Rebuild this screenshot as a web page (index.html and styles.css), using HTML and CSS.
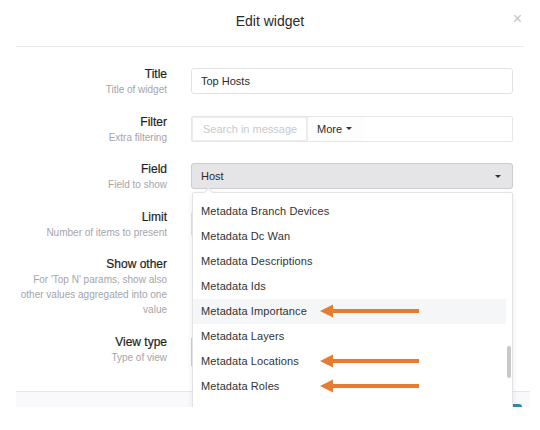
FILE: index.html
```html
<!DOCTYPE html>
<html>
<head>
<meta charset="utf-8">
<link rel="stylesheet" href="styles.css">
</head>
<body>
<div class="modal">
  <div class="header">
    <h1 class="title">Edit widget</h1>
    <span class="close">×</span>
  </div>
  <div class="body">
    <div class="row">
      <div class="label"><div class="name">Title</div><div class="hint">Title of widget</div></div>
      <div class="control"><div class="input">Top Hosts</div></div>
    </div>
    <div class="row">
      <div class="label"><div class="name">Filter</div><div class="hint">Extra filtering</div></div>
      <div class="control">
        <div class="group">
          <div class="search">Search in message</div>
          <div class="more">More <span class="caret"></span></div>
        </div>
      </div>
    </div>
    <div class="row">
      <div class="label"><div class="name">Field</div><div class="hint">Field to show</div></div>
      <div class="control field">
        <div class="select">Host <span class="caret"></span></div>
        <div class="dropdown">
          <span class="notch"></span>
          <ul class="menu">
            <li class="item">Metadata Branch Devices</li>
            <li class="item">Metadata Dc Wan</li>
            <li class="item">Metadata Descriptions</li>
            <li class="item">Metadata Ids</li>
            <li class="item hover">Metadata Importance</li>
            <li class="item">Metadata Layers</li>
            <li class="item">Metadata Locations</li>
            <li class="item">Metadata Roles</li>
          </ul>
          <span class="thumb"></span>
          <svg class="arrow a1" width="100" height="14" viewBox="0 0 100 14"><path d="M0 7 L13 0.5 L13 5 L99 5 L99 9 L13 9 L13 13.5 Z" fill="#e67c30"/></svg>
          <svg class="arrow a2" width="100" height="14" viewBox="0 0 100 14"><path d="M0 7 L13 0.5 L13 5 L99 5 L99 9 L13 9 L13 13.5 Z" fill="#e67c30"/></svg>
          <svg class="arrow a3" width="100" height="14" viewBox="0 0 100 14"><path d="M0 7 L13 0.5 L13 5 L99 5 L99 9 L13 9 L13 13.5 Z" fill="#e67c30"/></svg>
        </div>
      </div>
    </div>
    <div class="row">
      <div class="label"><div class="name">Limit</div><div class="hint">Number of items to present</div></div>
      <div class="control"><div class="input"></div></div>
    </div>
    <div class="row">
      <div class="label"><div class="name">Show other</div><div class="hint">For 'Top N' params, show also other values aggregated into one value</div></div>
      <div class="control"></div>
    </div>
    <div class="row">
      <div class="label"><div class="name">View type</div><div class="hint">Type of view</div></div>
      <div class="control"><div class="input tall"></div></div>
    </div>
  </div>
  <div class="footer"><span class="save"></span></div>
</div>
</body>
</html>
```
FILE: styles.css
```css
* { box-sizing: border-box; }
html, body { margin: 0; padding: 0; background: #fff; }
body {
  font-family: "Liberation Sans", Arial, sans-serif;
  color: #333;
}
.modal {
  position: relative;
  width: 540px;
  height: 407px;
  overflow: hidden;
  background: #fff;
}
.header {
  position: relative;
  height: 47px;
  margin: 0 16px;
  border-bottom: 1px solid #e9e9ec;
  display: flex;
  justify-content: center;
}
.title {
  margin: 0;
  font-size: 14px;
  font-weight: normal;
  line-height: 42px;
  color: #2a2a2e;
}
.close {
  position: absolute;
  right: 2px;
  top: 10px;
  font-size: 16px;
  line-height: 18px;
  color: #c4c4c8;
}
.body {
  height: 344px;
  padding-top: 19px;
}
.row {
  display: grid;
  grid-template-columns: 151px 322px;
  column-gap: 24px;
  padding-left: 16px;
  margin-bottom: 16.5px;
}
.label { text-align: right; }
.name {
  font-size: 12px;
  line-height: 16px;
  color: #1e1e22;
  -webkit-text-stroke: 0.2px #1e1e22;
}
.hint {
  font-size: 10px;
  line-height: 15px;
  color: #a4a4aa;
}
.control { margin-top: 2px; position: relative; }
.input {
  height: 26px;
  border: 1px solid #e2e2e4;
  border-radius: 3px;
  padding: 0 9px;
  font-size: 11px;
  line-height: 24px;
  color: #2b2b2b;
  background: #fff;
}
.input.tall { height: 32px; border-color: #cfcfd2; }
.group {
  display: flex;
  height: 26px;
  border: 1px solid #e6e6e8;
  border-radius: 2px;
  background: #fff;
}
.search {
  width: 116px;
  flex: none;
  white-space: nowrap;
  overflow: hidden;
  border: 1px solid #ececee;
  border-width: 1px 2px 1px 1px;
  padding: 0 0 0 10px;
  font-size: 11px;
  line-height: 22px;
  color: #c9c9cd;
}
.more {
  width: 56px;
  padding-left: 9px;
  font-size: 11px;
  line-height: 24px;
  color: #2b2b2b;
  background: #fdfdfd;
  display: flex;
  align-items: center;
  gap: 4px;
}
.caret {
  display: inline-block;
  width: 0;
  height: 0;
  border-left: 3px solid transparent;
  border-right: 3px solid transparent;
  border-top: 3px solid #333;
}
.select {
  height: 26px;
  border: 1px solid #cdcdd0;
  border-radius: 3px;
  background: #e5e5e7;
  padding: 0 9px;
  font-size: 11px;
  line-height: 24px;
  color: #2b2b2b;
  display: flex;
  justify-content: space-between;
  align-items: center;
}
.select .caret { margin-right: 2px; }
.dropdown {
  position: absolute;
  top: 29px;
  left: 1px;
  width: 321px;
  height: 240px;
  background: #fff;
  border: 1px solid #e3e3e6;
  border-radius: 2px;
  box-shadow: 0 2px 6px rgba(0, 0, 0, 0.08);
  z-index: 5;
}
.notch {
  position: absolute;
  top: -4px;
  left: 12px;
  width: 7px;
  height: 7px;
  background: #fff;
  border-top: 1px solid #e3e3e6;
  border-left: 1px solid #e3e3e6;
  transform: rotate(45deg);
}
.menu {
  list-style: none;
  margin: 0;
  padding: 6px 6px 0 0;
}
.item {
  height: 25px;
  padding-left: 8px;
  font-size: 11px;
  letter-spacing: 0.1px;
  line-height: 25px;
  color: #333;
}
.item.hover { background: #f5f6f8; }
.thumb {
  position: absolute;
  right: 1px;
  top: 153px;
  width: 4px;
  height: 32px;
  border-radius: 2px;
  background: #c8c8cb;
}
.arrow { position: absolute; left: 127px; }
.a1 { top: 111px; }
.a2 { top: 161px; }
.a3 { top: 186px; }
.footer {
  position: relative;
  height: 20px;
  margin: 0 10px 0 16px;
  border-top: 1px solid #e6e6ea;
  background: #f9f9fb;
}
.save {
  position: absolute;
  top: 12px;
  left: 470px;
  width: 36px;
  height: 24px;
  border-radius: 3px;
  background: #2a8fa5;
}
```
